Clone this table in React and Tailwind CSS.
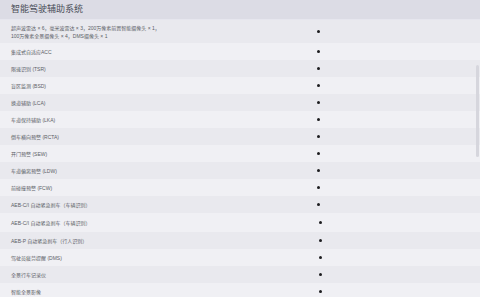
import React from 'react'

const rows = [
  { label: ['超声波雷达 × 6，毫米波雷达 × 3，200万像素前置智能摄像头 × 1，', '100万像素全景摄像头 × 4，DMS摄像头 × 1'], tall: true },
  { label: ['集成式自适应ACC'] },
  { label: ['限速识别 (TSR)'] },
  { label: ['盲区监测 (BSD)'] },
  { label: ['换道辅助 (LCA)'] },
  { label: ['车道保持辅助 (LKA)'] },
  { label: ['倒车横向预警 (RCTA)'] },
  { label: ['开门预警 (SEW)'] },
  { label: ['车道偏离预警 (LDW)'] },
  { label: ['前碰撞预警 (FCW)'] },
  { label: ['AEB-C/I 自动紧急刹车（车辆识别）'] },
  { label: ['AEB-C/I 自动紧急刹车（车辆识别）'], shift: true, extra: true },
  { label: ['AEB-P 自动紧急刹车（行人识别）'], shift: true },
  { label: ['驾驶员疲劳提醒 (DMS)'], shift: true },
  { label: ['全景行车记录仪'], shift: true },
  { label: ['智能全景影像'], shift: true },
]

function Row({ row, index }) {
  const bg = index % 2 === 0 ? 'bg-[#e9e9ee]' : 'bg-[#f0f0f4]'
  const h = row.tall ? 'h-[23px]' : row.extra ? 'h-[19px]' : 'h-[17px]'
  return (
    <div className={`flex items-center ${h} ${bg}`}>
      <div className="w-[300px] pl-[11px] flex flex-col justify-center text-[5px] leading-[8px] text-[#5b5e66]">
        {row.label.map((l, i) => <span key={i} className="whitespace-nowrap">{l}</span>)}
      </div>
      <div className={`flex items-center ${row.shift ? 'pl-[19px]' : 'pl-[17px]'}`}>
        <span className="block w-[3px] h-[3px] rounded-full bg-[#1c1c1f]" />
      </div>
    </div>
  )
}

export default function App() {
  return (
    <div className="relative w-[480px] h-[297px] overflow-hidden bg-[#eeeef2]" style={{ fontFamily: '"Liberation Sans", "Noto Sans CJK SC", sans-serif' }}>
      <div className="h-[20px] flex items-center pl-[11px] bg-[#dcdce5] border-b border-[#e6e6ee]">
        <span className="text-[9px] text-[#4b4e58]">智能驾驶辅助系统</span>
      </div>
      {rows.map((r, i) => <Row key={i} row={r} index={i} />)}
      <div className="absolute right-[1px] top-[65px] w-[3px] h-[92px] rounded-full bg-[#d6d6dd]" />
    </div>
  )
}
